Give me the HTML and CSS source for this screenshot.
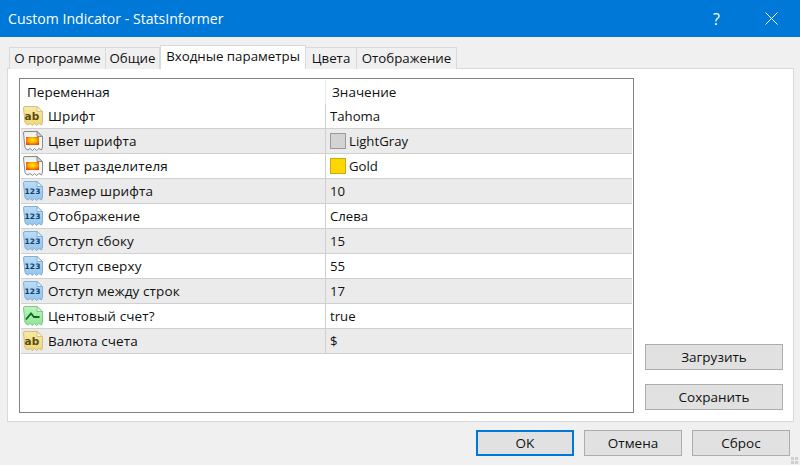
FILE: index.html
```html
<!DOCTYPE html>
<html lang="ru">
<head>
<meta charset="utf-8">
<title>Custom Indicator - StatsInformer</title>
<link rel="stylesheet" href="styles.css">
</head>
<body>
<svg class="defs" width="0" height="0">
  <defs>
    <radialGradient id="fire" cx="0.5" cy="0.4" r="0.62">
      <stop offset="0" stop-color="#fff200"/>
      <stop offset="0.55" stop-color="#ffa800"/>
      <stop offset="1" stop-color="#f04a00"/>
    </radialGradient>
    <linearGradient id="paper-str" x1="0" y1="0" x2="0" y2="1">
      <stop offset="0" stop-color="#f7e9a6"/>
      <stop offset="1" stop-color="#efd77a"/>
    </linearGradient>
    <linearGradient id="paper-color" x1="0" y1="0" x2="0" y2="1">
      <stop offset="0" stop-color="#e9e9e9"/>
      <stop offset="0.4" stop-color="#ffffff"/>
      <stop offset="1" stop-color="#f4f4f4"/>
    </linearGradient>
    <linearGradient id="paper-num" x1="0" y1="0" x2="0" y2="1">
      <stop offset="0" stop-color="#bcdcf6"/>
      <stop offset="1" stop-color="#94c4ec"/>
    </linearGradient>
    <linearGradient id="paper-bool" x1="0" y1="0" x2="0" y2="1">
      <stop offset="0" stop-color="#bdf3bf"/>
      <stop offset="1" stop-color="#8fe596"/>
    </linearGradient>
    <symbol id="icon-str" viewBox="0 0 22 22">
      <path d="M1.500 3q0-1.500 1.500-1.500H15l5.500 5V17l-1 3-2.500-1.500-2.500 2-2-2-2 2-2.500-2-2 1.500-2-1-1-1.500z" fill="url(#paper-str)" stroke="#d3c07a"/>
      <path d="M15 1.500V6.500h5.500z" fill="#fff8d8" stroke="#d3c07a"/>
      <text x="2.500" y="14.500" class="icon-ab">ab</text>
    </symbol>
    <symbol id="icon-color" viewBox="0 0 22 22">
      <path d="M1.500 3q0-1.500 1.500-1.500H15l5.500 5V17l-1 3-2.500-1.500-2.500 2-2-2-2 2-2.500-2-2 1.500-2-1-1-1.500z" fill="url(#paper-color)" stroke="#8a8a8a"/>
      <path d="M15 1.500V6.500h5.500z" fill="#d2d2d2" stroke="#8a8a8a"/>
      <rect x="4" y="7" width="13" height="8" fill="url(#fire)"/>
    </symbol>
    <symbol id="icon-num" viewBox="0 0 22 22">
      <path d="M1.500 3q0-1.500 1.500-1.500H15l5.500 5V17l-1 3-2.500-1.500-2.500 2-2-2-2 2-2.500-2-2 1.500-2-1-1-1.500z" fill="url(#paper-num)" stroke="#84afd6"/>
      <path d="M15 1.500V6.500h5.500z" fill="#e4f2fd" stroke="#84afd6"/>
      <text x="2.500" y="14" class="icon-123">123</text>
    </symbol>
    <symbol id="icon-bool" viewBox="0 0 22 22">
      <path d="M1.500 3q0-1.500 1.500-1.500H15l5.500 5V17l-1 3-2.500-1.500-2.500 2-2-2-2 2-2.500-2-2 1.500-2-1-1-1.500z" fill="url(#paper-bool)" stroke="#7fcb85"/>
      <path d="M15 1.500V6.500h5.500z" fill="#e2fbe3" stroke="#7fcb85"/>
      <path d="M4 14.500 9 8.500l3 3.500h5.500" fill="none" stroke="#0c6b1c" stroke-width="1.800"/>
    </symbol>
  </defs>
</svg>

<header class="titlebar">
  <span class="title">Custom Indicator - StatsInformer</span>
  <span class="help">?</span>
  <svg class="close" width="13" height="13" viewBox="0 0 13 13"><path d="M.5.500l12 12M12.500.500l-12 12" stroke="#fff" stroke-width="1" fill="none"/></svg>
</header>

<main class="dialog">
  <nav class="tabs">
    <a class="tab tab-about">О программе</a>
    <a class="tab tab-common">Общие</a>
    <a class="tab tab-active">Входные параметры</a>
    <a class="tab tab-colors">Цвета</a>
    <a class="tab tab-display">Отображение</a>
  </nav>

  <section class="panel">
    <div class="grid">
      <div class="row row-head">
        <div class="cell-name">Переменная</div>
        <div class="cell-value">Значение</div>
      </div>
      <div class="row">
        <div class="cell-name"><svg class="icon"><use href="#icon-str"/></svg>Шрифт</div>
        <div class="cell-value">Tahoma</div>
      </div>
      <div class="row row-alt">
        <div class="cell-name"><svg class="icon"><use href="#icon-color"/></svg>Цвет шрифта</div>
        <div class="cell-value"><i class="swatch swatch-gray"></i>LightGray</div>
      </div>
      <div class="row">
        <div class="cell-name"><svg class="icon"><use href="#icon-color"/></svg>Цвет разделителя</div>
        <div class="cell-value"><i class="swatch swatch-gold"></i>Gold</div>
      </div>
      <div class="row row-alt">
        <div class="cell-name"><svg class="icon"><use href="#icon-num"/></svg>Размер шрифта</div>
        <div class="cell-value">10</div>
      </div>
      <div class="row">
        <div class="cell-name"><svg class="icon"><use href="#icon-num"/></svg>Отображение</div>
        <div class="cell-value">Слева</div>
      </div>
      <div class="row row-alt">
        <div class="cell-name"><svg class="icon"><use href="#icon-num"/></svg>Отступ сбоку</div>
        <div class="cell-value">15</div>
      </div>
      <div class="row">
        <div class="cell-name"><svg class="icon"><use href="#icon-num"/></svg>Отступ сверху</div>
        <div class="cell-value">55</div>
      </div>
      <div class="row row-alt">
        <div class="cell-name"><svg class="icon"><use href="#icon-num"/></svg>Отступ между строк</div>
        <div class="cell-value">17</div>
      </div>
      <div class="row">
        <div class="cell-name"><svg class="icon"><use href="#icon-bool"/></svg>Центовый счет?</div>
        <div class="cell-value">true</div>
      </div>
      <div class="row row-alt">
        <div class="cell-name"><svg class="icon"><use href="#icon-str"/></svg>Валюта счета</div>
        <div class="cell-value">$</div>
      </div>
    </div>
    <aside class="side">
      <button class="btn btn-side">Загрузить</button>
      <button class="btn btn-side">Сохранить</button>
    </aside>
  </section>

  <footer class="actions">
    <button class="btn btn-main btn-default">OK</button>
    <button class="btn btn-main">Отмена</button>
    <button class="btn btn-main">Сброс</button>
  </footer>
</main>
<svg class="grip" width="8" height="8" viewBox="0 0 8 8"><path d="M0 0h3v3H0zM4 0h3v3H4zM0 4h3v3H0zM4 4h3v3H4z" fill="#cfcfcf"/></svg>
</body>
</html>
```

FILE: styles.css
```css
* { box-sizing: border-box; }

html, body { margin: 0; height: 100%; }

body {
  position: relative;
  width: 800px;
  height: 465px;
  overflow: hidden;
  background: #f0f0f0;
  color: #111;
  font: 13.5px "Open Sans", "Noto Sans", sans-serif;
}

.defs { position: absolute; }

.titlebar {
  display: flex;
  align-items: center;
  height: 37px;
  padding: 0 0 0 8px;
  background: #0078d7;
  color: #fff;
}
.title { flex: 1; font-size: 14.1px; }
.help { width: 14px; margin-right: 38px; font-size: 16px; }
.close { margin-right: 22px; }

.dialog { padding: 8px 6px 0 7px; }

/* tabs */
.tabs {
  display: flex;
  align-items: flex-end;
  height: 23px;
  padding-left: 2px;
  font-size: 13.3px;
}
.tab {
  height: 22px;
  margin-bottom: -1px;
  border: 1px solid #d9d9d9;
  border-bottom: 0;
  border-left: 0;
  background: #f0f0f0;
  text-align: center;
  line-height: 20px;
}
.tab-about { width: 97px; border-left: 1px solid #d9d9d9; }
.tab-common { width: 54px; }
.tab-active {
  position: relative;
  width: 146px;
  height: 24px;
  margin-bottom: -1px;
  border-left: 1px solid #d9d9d9;
  background: #fff;
  line-height: 21px;
}
.tab-colors { width: 51px; }
.tab-display { width: 100px; }

.panel {
  display: flex;
  height: 354px;
  width: 787px;
  padding: 9px 9px 7px 11px;
  border: 1px solid #d9d9d9;
  background: #fff;
}

/* parameters list */
.grid {
  flex: none;
  width: 615px;
  height: 335px;
  padding: 0 1px;
  border: 1px solid #838383;
  background: #fff;
}
.row {
  display: flex;
  height: 25px;
  border-bottom: 1px solid #d0d0d0;
  line-height: 24px;
}
.row-head { height: 25px; border-bottom: 0; padding-top: 1px; }
.row-alt { background: #ebebeb; }
.cell-name {
  display: flex;
  align-items: center;
  width: 305px;
  padding-left: 1px;
  border-right: 1px solid #d0d0d0;
  letter-spacing: .1px;
}
.cell-value {
  display: flex;
  align-items: center;
  padding-left: 4px;
  font-size: 13.2px;
}
.row-head .cell-name { padding-left: 6px; border-right-color: #ececec; letter-spacing: 0; }
.row-head .cell-value { padding-left: 6px; font-size: 13.5px; }
.icon { flex: none; width: 22px; height: 22px; margin-right: 4px; }
.icon-ab { font: bold 10.500px "DejaVu Sans", sans-serif; fill: #5a4c12; }
.icon-123 { font: bold 7.500px "DejaVu Sans", sans-serif; fill: #12406b; }

.swatch {
  display: block;
  width: 16px;
  height: 16px;
  margin-right: 3px;
  border: 1px solid #9a9a9a;
}
.swatch-gray { background: #d3d3d3; }
.swatch-gold { background: #ffd700; border-color: #c9aa10; }

/* buttons */
.btn {
  display: block;
  padding: 0 0 1px;
  border: 1px solid #adadad;
  background: #e1e1e1;
  color: #111;
  font: inherit;
}
.side {
  display: flex;
  flex-direction: column;
  justify-content: flex-end;
  gap: 14px;
  margin-left: 11px;
  padding-bottom: 4px;
}
.btn-side { width: 138px; height: 26px; }

.actions {
  display: flex;
  justify-content: flex-end;
  gap: 10px;
  padding: 8px 4px 0 0;
}
.btn-main { width: 98px; height: 26px; }
.btn-default { border: 2px solid #0078d7; }

.grip { position: absolute; right: 1px; bottom: 0; }
```
